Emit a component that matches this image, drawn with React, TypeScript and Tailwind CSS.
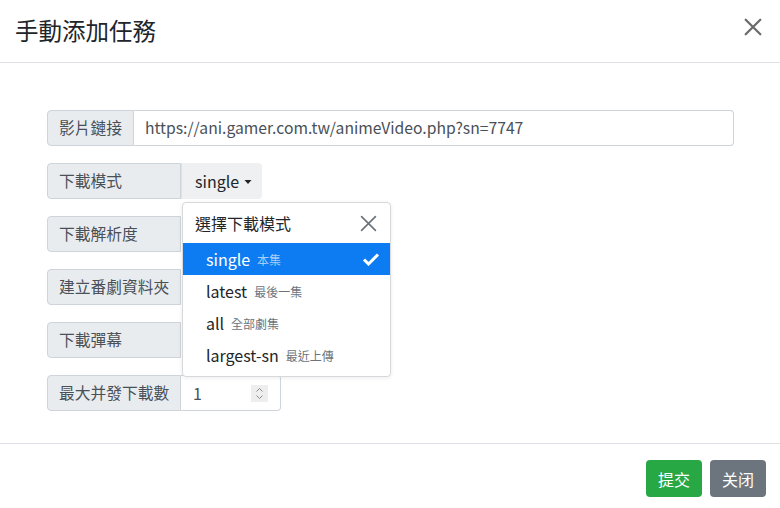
import React from "react";

const font = { fontFamily: '"Noto Sans CJK TC", "Noto Sans", sans-serif' };

function Label({ text, w }: { text: string; w?: string }) {
  return (
    <div
      className={`h-[36px] flex items-center px-[11px] whitespace-nowrap bg-[#e9ecef] border border-[#ced4da] rounded-l-[4px] text-[15.75px] text-[#495057] shrink-0 ${w ?? ""}`}
    >
      {text}
    </div>
  );
}

function XIcon({ size, color, sw }: { size: number; color: string; sw: number }) {
  return (
    <svg width={size} height={size} viewBox="0 0 16 16" fill="none">
      <path d="M1.5 1.5 L14.5 14.5 M14.5 1.5 L1.5 14.5" stroke={color} strokeWidth={sw} strokeLinecap="round" />
    </svg>
  );
}

export default function App() {
  return (
    <div className="w-[780px] h-[508px] bg-white overflow-hidden flex flex-col" style={font}>
      <div className="h-[63px] shrink-0 border-b border-[#dee2e6] flex items-center justify-between pl-[15px] pr-[18px]">
        <div className="text-[23.5px] text-[#212529] leading-none pb-[1px]">手動添加任務</div>
        <div className="pb-[8px]">
          <XIcon size={18} color="#6b6b6b" sw={2} />
        </div>
      </div>

      <div className="flex-1 flex flex-col gap-[17px] pt-[47px] pl-[47px] pr-[46px]">
        <div className="flex">
          <Label text="影片鏈接" />
          <div className="flex-1 h-[36px] border border-l-0 border-[#ced4da] rounded-r-[4px] flex items-center px-[11px] text-[15.7px] text-[#495057]">
            https://ani.gamer.com.tw/animeVideo.php?sn=7747
          </div>
        </div>

        <div className="flex">
          <Label text="下載模式" w="w-[134px]" />
          <div className="relative">
            <div className="h-[36px] w-[81px] bg-[#eef0f2] rounded-r-[4px] flex items-center pl-[13px] text-[16px] text-[#212529] border-l border-[#dfe2e5]">
              single
              <svg width="10" height="6" viewBox="0 0 10 6" className="ml-[4px] mt-[1px]">
                <path d="M1.5 1 L8.5 1 L5 5 Z" fill="#212529" />
              </svg>
            </div>
            <div className="absolute left-[1px] top-[39px] w-[209px] h-[175px] bg-white border border-[#d6d8db] rounded-[4px] shadow-[0_1px_4px_rgba(0,0,0,0.08)] z-10 flex flex-col">
              <div className="h-[40px] shrink-0 flex items-center justify-between pl-[12px] pr-[13px] text-[16px] text-[#212529]">
                <span>選擇下載模式</span>
                <XIcon size={17} color="#6c757d" sw={1.6} />
              </div>
              <div className="h-[32px] bg-[#0d7cf2] flex items-center pl-[23px] pr-[10px] text-white">
                <span className="text-[16px]">single</span>
                <span className="text-[12px] ml-[7px] text-[#a8cdf8] mt-[2px]">本集</span>
                <svg width="18" height="14" viewBox="0 0 18 14" className="ml-auto">
                  <path d="M2 7.5 L6.5 12 L16 2.5" stroke="white" strokeWidth="3" fill="none" strokeLinejoin="miter" />
                </svg>
              </div>
              {[
                ["latest", "最後一集"],
                ["all", "全部劇集"],
                ["largest-sn", "最近上傳"],
              ].map(([a, b]) => (
                <div key={a} className="h-[32px] flex items-center pl-[23px] text-[#212529]">
                  <span className="text-[16px]">{a}</span>
                  <span className="text-[12px] ml-[7px] text-[#6c757d] mt-[2px]">{b}</span>
                </div>
              ))}
            </div>
          </div>
        </div>

        <div className="flex">
          <Label text="下載解析度" w="w-[134px]" />
        </div>
        <div className="flex">
          <Label text="建立番劇資料夾" w="w-[134px]" />
        </div>
        <div className="flex">
          <Label text="下載彈幕" w="w-[134px]" />
        </div>
        <div className="flex">
          <Label text="最大并發下載數" w="w-[134px]" />
          <div className="w-[100px] h-[36px] border border-l-0 border-[#ced4da] rounded-r-[4px] flex items-center pl-[12px] pr-[12px] text-[16px] text-[#495057]">
            <span>1</span>
            <div className="ml-auto w-[17px] h-[17px] bg-[#eeeeee] flex items-center justify-center">
              <svg width="9" height="13" viewBox="0 0 9 13" fill="none">
                <path d="M1.5 4.5 L4.5 1.5 L7.5 4.5 M1.5 8.5 L4.5 11.5 L7.5 8.5" stroke="#8a8a8a" strokeWidth="1" />
              </svg>
            </div>
          </div>
        </div>
      </div>

      <div className="h-[65px] shrink-0 border-t border-[#dee2e6] flex justify-end items-start pt-[16px] pr-[14px] gap-[8px]">
        <div className="h-[37px] px-[12px] bg-[#28a745] rounded-[4px] text-white text-[16px] flex items-center">提交</div>
        <div className="h-[37px] px-[12px] bg-[#6c757d] rounded-[4px] text-white text-[16px] flex items-center">关闭</div>
      </div>
    </div>
  );
}
